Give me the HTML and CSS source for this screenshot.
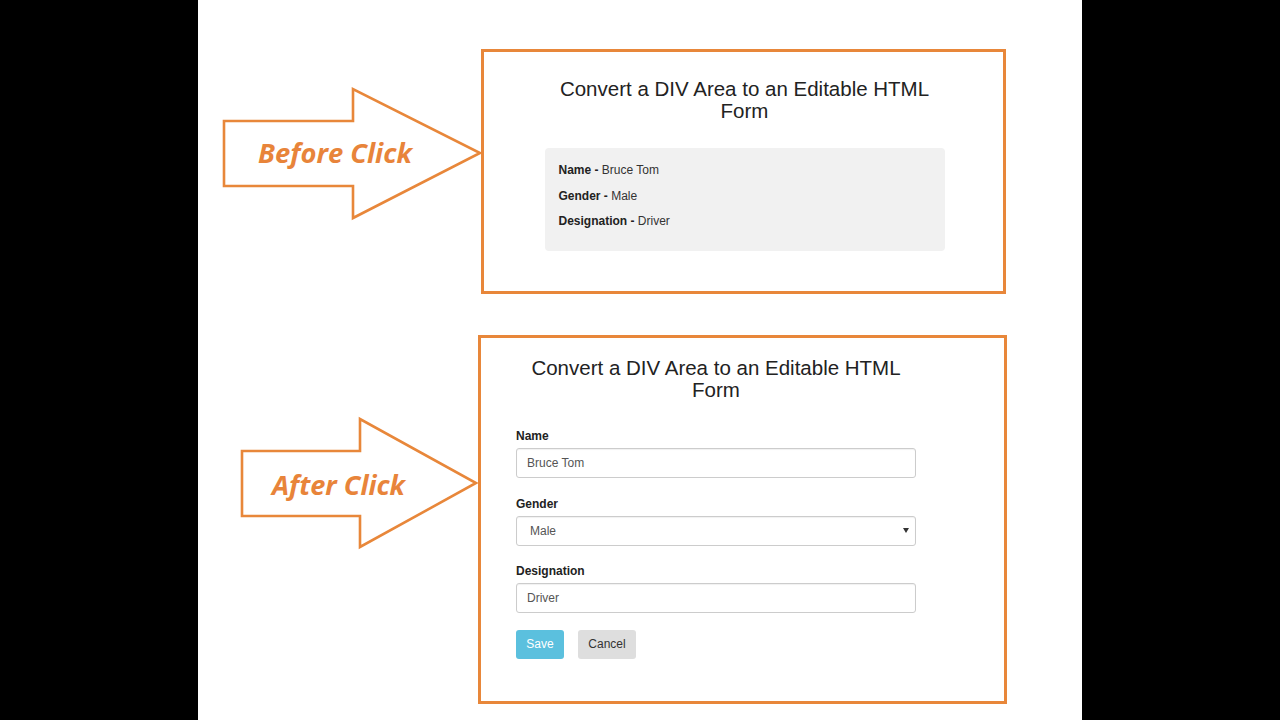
FILE: index.html
```html
<!DOCTYPE html>
<html>
<head>
<meta charset="utf-8">
<link rel="stylesheet" href="styles.css">
</head>
<body>
<div class="page">
  <div class="row row-1">
    <svg class="arrow arrow-1" width="259" height="134" viewBox="0 0 259 134">
      <polygon class="arrow-shape" points="2,34 131,34 131,2 258,66 131,131 131,99 2,99"/>
      <text class="arrow-text" x="36" y="76" textLength="154" lengthAdjust="spacingAndGlyphs">Before Click</text>
    </svg>
    <div class="box box-1">
      <h3 class="title">Convert a DIV Area to an Editable HTML Form</h3>
      <div class="panel">
        <p><b>Name - </b>Bruce Tom</p>
        <p><b>Gender - </b>Male</p>
        <p><b>Designation - </b>Driver</p>
      </div>
    </div>
  </div>
  <div class="row row-2">
    <svg class="arrow arrow-2" width="238" height="133" viewBox="0 0 238 133">
      <polygon class="arrow-shape" points="2,34 120,34 120,2 236,66 120,130 120,99 2,99"/>
      <text class="arrow-text" x="32" y="78" textLength="133" lengthAdjust="spacingAndGlyphs">After Click</text>
    </svg>
    <div class="box box-2">
      <div class="form">
        <h3 class="title">Convert a DIV Area to an Editable HTML Form</h3>
        <div class="group">
          <label class="label">Name</label>
          <input class="control" type="text" value="Bruce Tom">
        </div>
        <div class="group">
          <label class="label">Gender</label>
          <div class="select-wrap">
            <select class="control select">
              <option>Male</option>
              <option>Female</option>
            </select>
          </div>
        </div>
        <div class="group">
          <label class="label">Designation</label>
          <input class="control" type="text" value="Driver">
        </div>
        <div class="actions">
          <button class="btn btn-save">Save</button>
          <button class="btn btn-cancel">Cancel</button>
        </div>
      </div>
    </div>
  </div>
</div>
</body>
</html>
```

FILE: styles.css
```css
html, body {
  margin: 0;
  padding: 0;
  background: #000;
}

body {
  font-family: "Liberation Sans", Arial, sans-serif;
  color: #333;
}

.page {
  width: 884px;
  min-height: 720px;
  margin: 0 auto;
  background: #fff;
  padding-top: 49px;
  box-sizing: border-box;
}

.row {
  display: flex;
  align-items: flex-start;
}

.row-1 {
  padding-left: 24px;
}

.row-2 {
  padding-left: 42px;
  margin-top: 41px;
}

.arrow {
  display: block;
  flex: none;
  overflow: visible;
}

.arrow-1 {
  margin-top: 38px;
}

.arrow-2 {
  margin-top: 82px;
}

.arrow-shape {
  fill: #fff;
  stroke: #e8873a;
  stroke-width: 2.6;
  stroke-linejoin: miter;
}

.arrow-text {
  fill: #e8843a;
  font-family: "Open Sans", "Lato", sans-serif;
  font-style: italic;
  font-weight: 700;
  font-size: 26px;
}

.box {
  flex: none;
  box-sizing: border-box;
  border: 3px solid #e8873a;
  background: #fff;
}

.box-1 {
  width: 525px;
  height: 245px;
  padding-top: 26px;
  display: flex;
  flex-direction: column;
  align-items: center;
}

.box-1 .title {
  width: 400px;
  margin-left: 2px;
}

.box-2 {
  width: 529px;
  height: 369px;
  padding: 19px 0 0 35px;
}

.title {
  margin: 0 0 26px;
  font-size: 20.5px;
  line-height: 22px;
  font-weight: normal;
  text-align: center;
  color: #222;
}

.panel {
  width: 400px;
  box-sizing: border-box;
  margin-left: 2px;
  background: #f1f1f1;
  border-radius: 4px;
  padding: 14px 14px 10px;
  height: 103px;
}

.panel p {
  margin: 0 0 8px;
  font-size: 12px;
  line-height: 17.5px;
  color: #333;
}

.panel b {
  font-weight: bold;
  color: #222;
}

.form {
  width: 400px;
}

.group {
  margin-bottom: 16.5px;
}

.label {
  display: block;
  font-size: 12px;
  line-height: 18px;
  font-weight: bold;
  color: #222;
  margin-bottom: 3px;
}

.control {
  display: block;
  width: 400px;
  height: 30px;
  box-sizing: border-box;
  border: 1px solid #ccc;
  border-radius: 3px;
  padding: 0 10px;
  font-family: "Liberation Sans", Arial, sans-serif;
  font-size: 12px;
  color: #555;
  background: #fff;
  box-shadow: inset 0 1px 1px rgba(0, 0, 0, 0.06);
  outline: none;
  margin: 0;
}

.select-wrap {
  position: relative;
  width: 400px;
}

.select {
  appearance: none;
  -webkit-appearance: none;
  padding-left: 13px;
}

.select-wrap::after {
  content: "";
  position: absolute;
  right: 7px;
  top: 12px;
  width: 0;
  height: 0;
  border-left: 3px solid transparent;
  border-right: 3px solid transparent;
  border-top: 5px solid #333;
  pointer-events: none;
}

.actions {
  display: flex;
  gap: 14px;
  margin-top: 16px;
}

.btn {
  height: 29px;
  box-sizing: border-box;
  border: none;
  border-radius: 3px;
  font-family: "Liberation Sans", Arial, sans-serif;
  font-size: 12px;
  padding: 0;
  margin: 0;
}

.btn-save {
  width: 48px;
  background: #5bc0de;
  color: #fff;
}

.btn-cancel {
  width: 58px;
  background: #dedede;
  color: #333;
}
```
